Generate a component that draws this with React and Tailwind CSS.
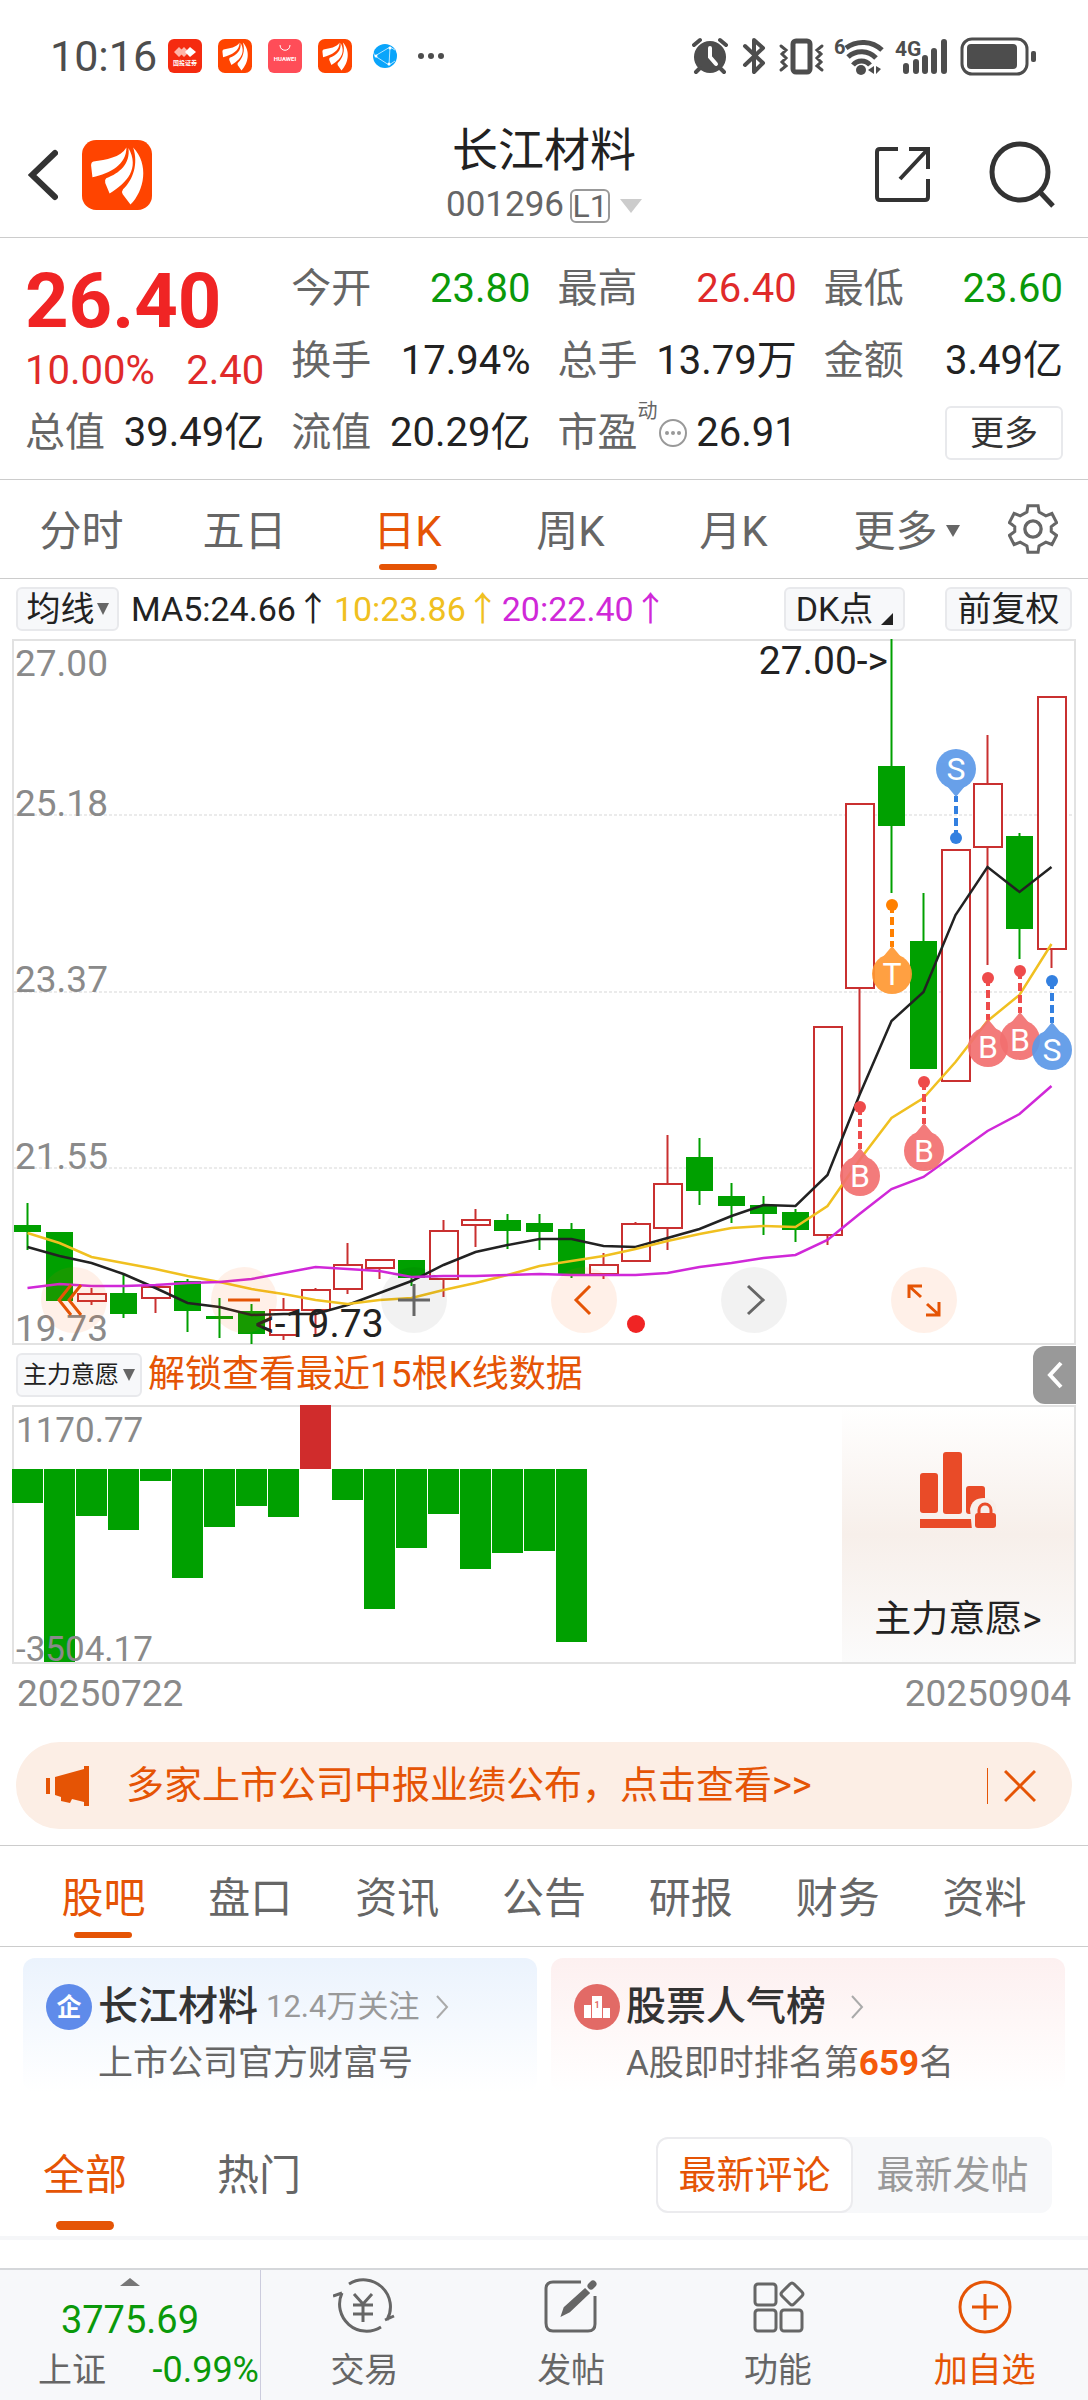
import { useState } from 'react';

// Daily candles: [high, bodyTop, bodyBottom, low, isUp]
const CANDLES = [
    [1203, 1225, 1232, 1250, 0],
    [1232, 1232, 1301, 1301, 0],
    [1288, 1294, 1301, 1305, 1],
    [1275, 1293, 1314, 1318, 0],
    [1287, 1287, 1298, 1313, 1],
    [1279, 1281, 1311, 1332, 0],
    [1298, 1316, 1319, 1338, 0],
    [1304, 1311, 1334, 1344, 0],
    [1298, 1310, 1335, 1340, 1],
    [1288, 1290, 1310, 1336, 1],
    [1243, 1265, 1289, 1294, 1],
    [1260, 1260, 1268, 1279, 1],
    [1260, 1260, 1278, 1286, 0],
    [1220, 1231, 1279, 1297, 1],
    [1209, 1220, 1225, 1247, 1],
    [1214, 1220, 1231, 1249, 0],
    [1214, 1223, 1232, 1250, 0],
    [1223, 1229, 1275, 1278, 0],
    [1253, 1265, 1274, 1279, 1],
    [1222, 1224, 1261, 1261, 1],
    [1135, 1184, 1228, 1250, 1],
    [1138, 1157, 1191, 1205, 0],
    [1183, 1196, 1206, 1223, 0],
    [1196, 1205, 1214, 1235, 0],
    [1209, 1212, 1230, 1242, 0],
    [1027, 1027, 1235, 1245, 1],
    [804, 804, 988, 1094, 1],
    [639, 766, 826, 893, 0],
    [893, 941, 1069, 1069, 0],
    [850, 850, 1081, 1081, 1],
    [735, 784, 847, 965, 1],
    [833, 836, 929, 959, 0],
    [697, 697, 949, 968, 1],
];

const MA5 = [1247, 1256, 1263, 1274, 1288, 1303, 1307, 1315, 1314, 1314, 1305, 1293, 1281, 1265, 1252, 1245, 1239, 1239, 1246, 1247, 1238, 1229, 1216, 1205, 1206, 1175, 1095, 1021, 992, 915, 867, 892, 867];
const MA10 = [1233, 1243, 1257, 1263, 1269, 1276, 1282, 1289, 1294, 1300, 1304, 1300, 1298, 1290, 1283, 1275, 1266, 1261, 1256, 1249, 1241, 1234, 1228, 1226, 1227, 1206, 1160, 1118, 1098, 1062, 1021, 995, 944];
const MA20 = [1288, 1284, 1286, 1286, 1285, 1283, 1282, 1279, 1273, 1267, 1269, 1271, 1277, 1276, 1276, 1275, 1274, 1275, 1275, 1275, 1273, 1267, 1263, 1258, 1255, 1240, 1214, 1189, 1177, 1154, 1131, 1114, 1086];

// Trade points: candle index, y of the dot, label, 1 = pin below / -1 = pin above
const MARKERS = [
    { i: 27, y: 905, label: 'T', dir: 1, dot: '#ff8000', pin: '#ff9933' },
    { i: 29, y: 838, label: 'S', dir: -1, dot: '#3380e0', pin: '#5c99e8' },
    { i: 30, y: 978, label: 'B', dir: 1, dot: '#ee4b4b', pin: '#f27070' },
    { i: 31, y: 971, label: 'B', dir: 1, dot: '#ee4b4b', pin: '#f27070' },
    { i: 32, y: 981, label: 'S', dir: 1, dot: '#3380e0', pin: '#5c99e8' },
    { i: 26, y: 1107, label: 'B', dir: 1, dot: '#ee4b4b', pin: '#f27070' },
    { i: 28, y: 1082, label: 'B', dir: 1, dot: '#ee4b4b', pin: '#f27070' },
];

// End of each bar, measured from the zero line at 64
const VOLUME = [98, 257, 111, 125, 76, 173, 122, 101, 112, 0, 95, 204, 143, 109, 164, 148, 146, 237];

const cx = (i) => 27.5 + i * 32;
const linePoints = (values) => values.map((y, i) => `${cx(i)},${y}`).join(' ');

const BrandLogo = ({ className }) => (
    <svg viewBox="0 0 208 208" className={className}>
        <rect width="208" height="208" rx="42" fill="#ff4400" />
        <g fill="#fff">
            <path d="M132 22C114 52 72 58 34 64Q27 66 27 76L31 111C86 98 132 72 132 22Z" />
            <path d="M138 24C144 72 112 98 72 114Q67 118 69 128L82 159C134 128 172 84 138 24Z" />
            <path d="M152 22C168 70 152 118 122 146Q117 152 121 161L144 192C186 150 200 72 152 22Z" />
        </g>
    </svg>
);

const StatusBar = () => (
    <div className="flex h-[112px] items-center justify-between pl-[50px] pr-[52px] text-[#4d4d4d]">
        <div className="flex items-center">
            <span className="w-[118px] text-[43px]">10:16</span>
            <div className="flex items-center gap-4">
                <svg viewBox="0 0 34 34" className="size-[34px]">
                    <rect width="34" height="34" rx="6" fill="#f52b10" />
                    <path d="M6 13l5-5 5 5-5 5zM11 13l5-5 5 5-5 5z" fill="#ffb5a8" />
                    <path d="M17 13l5-5 6 5-6 5z" fill="#fff" />
                    <text x="17" y="26" fontSize="6" fontWeight="700" textAnchor="middle" fill="#fff">国投证券</text>
                </svg>
                <BrandLogo className="size-[34px]" />
                <svg viewBox="0 0 34 34" className="size-[34px]">
                    <rect width="34" height="34" rx="6" fill="#ff4d58" />
                    <path d="M12 6c0 7 10 7 10 0" fill="none" stroke="#fff" />
                    <text x="17" y="22" fontSize="6" fontWeight="700" textAnchor="middle" fill="#fff">HUAWEI</text>
                </svg>
                <BrandLogo className="size-[34px]" />
                <svg viewBox="0 0 34 34" className="size-[34px]">
                    <circle cx="17" cy="17" r="12" fill="#0aa5fb" />
                    <path d="M7 17L22 8L21 26ZM7 17L5 13M22 8l5 3M21 26l6-4" fill="none" stroke="#fff" strokeWidth="0.7" />
                    <g fill="#fff">
                        <circle cx="8" cy="17" r="1.5" />
                        <circle cx="22" cy="9" r="1.5" />
                        <circle cx="21" cy="25" r="1.5" />
                    </g>
                </svg>
                <svg viewBox="0 0 26 6" className="h-[6px] w-[26px]" fill="currentColor">
                    <circle cx="3" cy="3" r="3" />
                    <circle cx="13" cy="3" r="3" />
                    <circle cx="23" cy="3" r="3" />
                </svg>
            </div>
        </div>

        {/* System icons */}
        <svg viewBox="0 0 344 40" className="h-10 w-[344px]" fill="currentColor">
            <circle cx="18" cy="21" r="16" />
            <path d="M18 12v9l6 7" fill="none" stroke="#fff" strokeWidth="4" strokeLinecap="round" />
            <path d="M2 9l6-5M34 9l-6-5M4 36l4-4M32 36l-4-4" fill="none" stroke="currentColor" strokeWidth="4" strokeLinecap="round" />
            <path d="M53 10l18 17-9 9V4l9 8-18 17" fill="none" stroke="currentColor" strokeWidth="4" strokeLinejoin="round" strokeLinecap="round" />
            <rect x="101" y="5" width="17" height="31" rx="3" fill="none" stroke="currentColor" strokeWidth="5" />
            <path d="M89 10l5 4-4 4 4 4-4 4 4 4-5 4M130 10l-5 4 4 4-4 4 4 4-4 4 5 4" fill="none" stroke="currentColor" strokeWidth="3" strokeLinecap="round" />
            <text x="142" y="18" fontSize="20" fontWeight="700">6</text>
            <g fill="none" stroke="currentColor" strokeWidth="5">
                <path d="M154 12a28 28 0 0 1 36 2" />
                <path d="M156 21a20 20 0 0 1 28 1" />
                <path d="M161 29a11 11 0 0 1 17 0" />
            </g>
            <circle cx="169" cy="34" r="5" />
            <path d="M182 30v8l-6-4zM184 30v8l5-5z" />
            <text x="203" y="20" fontSize="21" fontWeight="700">4G</text>
            <g stroke="currentColor" strokeWidth="6" strokeLinecap="round">
                <path d="M214 30v5M224 26v9M233 22v13M242 15v20M252 6v29" />
            </g>
            <rect x="270" y="3" width="65" height="35" rx="10" fill="none" stroke="currentColor" strokeWidth="3" />
            <rect x="275" y="8" width="50" height="25" rx="4" />
            <rect x="339" y="15" width="5" height="11" rx="2" />
        </svg>
    </div>
);

const Header = () => (
    <header className="flex h-[126px] items-center justify-between border-b border-[#ccc] px-7 text-[#333]">
        <div className="flex w-[200px] items-center gap-6">
            <button aria-label="返回">
                <svg viewBox="0 0 30 52" className="h-[52px] w-[30px]" fill="none" stroke="currentColor" strokeWidth="6" strokeLinecap="round">
                    <path d="M27 4L4 26l23 22" />
                </svg>
            </button>
            <BrandLogo className="size-[70px]" />
        </div>
        <div className="flex flex-col items-center pt-1.5">
            <h1 className="text-[46px] leading-[56px] text-[#222]">长江材料</h1>
            <div className="flex h-[56px] items-center text-[35px] text-[#666]">
                <span>001296</span>
                <span className="ml-1.5 flex h-[34px] w-10 items-center justify-center rounded-md border-2 border-[#999] text-[32px]">L1</span>
                <svg viewBox="0 0 22 14" className="ml-2.5 h-3.5 w-[22px]">
                    <path d="M0 0h22L11 14z" fill="#ccc" />
                </svg>
            </div>
        </div>
        <div className="flex w-[200px] items-center justify-end gap-14 pr-1">
            <button aria-label="分享">
                <svg viewBox="0 0 58 58" className="size-[58px]" fill="none" stroke="currentColor" strokeWidth="4">
                    <path d="M24 3H6Q3 3 3 6V51Q3 54 6 54H51Q54 54 54 51V33" />
                    <path d="M35 3h19v20M54 3L26 33" />
                </svg>
            </button>
            <button aria-label="搜索">
                <svg viewBox="0 0 68 68" className="size-[68px]" fill="none" stroke="currentColor" strokeWidth="5">
                    <circle cx="32" cy="31" r="28" />
                    <path d="M51 50l14 15" />
                </svg>
            </button>
        </div>
    </header>
);

const Stat = ({ label, value, tone = 'text-[#222]' }) => (
    <div className="flex items-center justify-between">
        <dt className="text-[#666]">{label}</dt>
        <dd className={tone}>{value}</dd>
    </div>
);

const Quote = () => (
    <dl className="grid auto-rows-[72px] grid-cols-4 gap-x-[27px] border-b border-[#ccc] px-[25px] pb-[10px] pt-[15px] text-[40px] leading-[72px]">
        <div className="row-span-2 pt-1 text-[#e02a2a]">
            <dd className="text-[76px] font-bold leading-[88px] text-[#f02424]">26.40</dd>
            <dd className="flex justify-between leading-[52px]">
                <span>10.00%</span>
                <span>2.40</span>
            </dd>
        </div>
        <Stat label="今开" value="23.80" tone="text-[#0a990a]" />
        <Stat label="最高" value="26.40" tone="text-[#e02a2a]" />
        <Stat label="最低" value="23.60" tone="text-[#0a990a]" />
        <Stat label="换手" value="17.94%" />
        <Stat label="总手" value="13.79万" />
        <Stat label="金额" value="3.49亿" />
        <Stat label="总值" value="39.49亿" />
        <Stat label="流值" value="20.29亿" />
        <div className="flex items-center justify-between">
            <dt className="flex items-center text-[#666]">
                市盈
                <sup className="top-0 self-start text-[20px] leading-[28px]">动</sup>
                <svg viewBox="0 0 30 30" className="size-[30px]" fill="#999">
                    <circle cx="15" cy="15" r="13" fill="none" stroke="#999" strokeWidth="2" />
                    <circle cx="9" cy="15" r="2" />
                    <circle cx="15" cy="15" r="2" />
                    <circle cx="21" cy="15" r="2" />
                </svg>
            </dt>
            <dd className="text-[#222]">26.91</dd>
        </div>
        <div className="flex items-center justify-end">
            <button className="h-[54px] w-[118px] rounded-md border-2 border-[#e8e9ec] text-[34px] leading-none text-[#333]">更多</button>
        </div>
    </dl>
);

const PERIODS = ['分时', '五日', '日K', '周K', '月K'];

const PeriodTabs = () => {
    const [active, setActive] = useState('日K');

    return (
        <nav className="flex h-[99px] border-b border-[#ccc] text-[42px] text-[#666]">
            {PERIODS.map((p) => (
                <button
                    key={p}
                    onClick={() => setActive(p)}
                    className={`relative flex flex-1 items-center justify-center pt-1 ${active === p ? 'text-[#e55405]' : ''}`}
                >
                    {p}
                    {active === p && <span className="absolute bottom-2 h-1.5 w-[58px] rounded-full bg-[#e55405]" />}
                </button>
            ))}
            <button className="flex flex-1 items-center justify-center gap-2 pt-1">
                <span className="pl-5">更多</span>
                <svg viewBox="0 0 14 12" className="h-3 w-3.5" fill="currentColor">
                    <path d="M0 0h14L7 12z" />
                </svg>
            </button>
            <button aria-label="设置" className="flex w-[110px] items-center justify-center">
                <svg viewBox="0 0 148 148" className="size-[50px]" fill="none" stroke="currentColor" strokeWidth="9">
                    <path d="M59 5H89L92 24L112 35L130 28L144 55L128 67V81L144 93L130 120L112 113L92 124L89 143H59L56 124L36 113L18 120L4 93L20 81V67L4 55L18 28L36 35L56 24Z" />
                    <circle cx="74" cy="74" r="24" strokeWidth="10" />
                </svg>
            </button>
        </nav>
    );
};

const Caret = ({ className }) => (
    <svg viewBox="0 0 12 12" className={className} fill="#666">
        <path d="M0 0h12L6 12z" />
    </svg>
);

const AverageRow = () => (
    <div className="flex h-[60px] items-center justify-between px-4 text-[34px] text-[#222]">
        <div className="flex items-center">
            <button className="flex h-11 w-[103px] items-center justify-center gap-0.5 rounded-md border-2 border-[#e8e9ec] bg-[#f7f8fa] leading-none">
                均线
                <Caret className="size-3" />
            </button>
            <span className="ml-3">MA5:24.66↑</span>
            <span className="ml-1 text-[#f0c020]">10:23.86↑</span>
            <span className="ml-0.5 text-[#d028d8]">20:22.40↑</span>
        </div>
        <div className="flex gap-10">
            <button className="flex h-11 w-[121px] items-center justify-center gap-2 rounded-md border-2 border-[#e8e9ec] bg-[#f7f8fa] leading-none">
                DK点
                <svg viewBox="0 0 12 12" className="mt-5 size-3">
                    <path d="M12 0v12H0z" fill="#222" />
                </svg>
            </button>
            <button className="h-11 w-[127px] rounded-md border-2 border-[#e8e9ec] bg-[#f7f8fa] leading-none">前复权</button>
        </div>
    </div>
);

const Marker = ({ i, y, label, dir, dot, pin }) => {
    const x = cx(i) + 0.5;
    const center = y + 69 * dir;
    return (
        <g>
            <circle cx={x} cy={y} r="6" fill={dot} />
            <path d={`M${x} ${y}V${y + 42 * dir}`} stroke={dot} strokeWidth="4" strokeDasharray="8 4" />
            <g fill={pin} opacity="0.92">
                <circle cx={x} cy={center} r="20" />
                <path d={`M${x - 9} ${center - 17 * dir}L${x} ${center - 28 * dir}L${x + 9} ${center - 17 * dir}Z`} />
            </g>
            <text x={x} y={center + 11} fontSize="32" textAnchor="middle" fill="#fff">{label}</text>
        </g>
    );
};

const TOOLS = [
    { name: '最早', warm: true, d: 'M30 18L18 33l12 15M40 18L28 33l12 15' },
    { name: '缩小', warm: true, d: 'M17 33h32' },
    { name: '放大', warm: false, d: 'M17 33h32M33 17v32' },
    { name: '左移', warm: true, d: 'M39 19L25 33l14 14' },
    { name: '右移', warm: false, d: 'M27 19l15 14-15 14' },
    { name: '全屏', warm: true, d: 'M18 31V19h13M19 20l11 10M48 35v13H35M47 47L36 37' },
];

const KLineChart = () => (
    <div className="relative px-3">
        <svg viewBox="12 639 1064 706" className="block w-full">
            <rect x="13" y="640" width="1062" height="704" fill="none" stroke="#e2e2e2" strokeWidth="2" />
            <g stroke="#ebebeb" strokeWidth="2" strokeDasharray="3 2">
                <path d="M14 815H1074M14 992H1074M14 1168H1074" />
            </g>

            {CANDLES.map(([high, top, bottom, low, up], i) => (
                <g key={i} stroke={up ? '#c93030' : '#00a000'} strokeWidth="2">
                    <path d={`M${cx(i)} ${high}V${top}M${cx(i)} ${bottom}V${low}`} />
                    {up ? (
                        <rect x={cx(i) - 13.5} y={top} width="28" height={bottom - top} fill="#fff" />
                    ) : (
                        <rect x={cx(i) - 13.5} y={top} width="27" height={bottom - top} fill="#00a000" stroke="none" />
                    )}
                </g>
            ))}

            <g fill="none" strokeWidth="2.5">
                <polyline points={linePoints(MA5)} stroke="#222" />
                <polyline points={linePoints(MA10)} stroke="#f0c020" />
                <polyline points={linePoints(MA20)} stroke="#d028d8" />
            </g>

            <g fontSize="37" fill="#8a8a8a">
                <text x="15" y="676">27.00</text>
                <text x="15" y="816">25.18</text>
                <text x="15" y="992">23.37</text>
                <text x="15" y="1169">21.55</text>
                <text x="15" y="1341">19.73</text>
            </g>
            <g fontSize="39" fill="#222">
                <text x="888" y="674" textAnchor="end">27.00-&gt;</text>
                <text x="255" y="1337">&lt;-19.73</text>
            </g>

            {MARKERS.map((m) => (
                <Marker key={m.i} {...m} />
            ))}
            <circle cx="636" cy="1324" r="9" fill="#f02424" />
        </svg>

        {/* Chart controls */}
        <div className="absolute bottom-3 left-[41px] flex gap-[104px]">
            {TOOLS.map((t) => (
                <button
                    key={t.name}
                    aria-label={t.name}
                    className={`size-[66px] rounded-full ${t.warm ? 'bg-[#ff5a00]/9 text-[#e55405]' : 'bg-black/5 text-[#666]'}`}
                >
                    <svg viewBox="0 0 66 66" className="size-full" fill="none" stroke="currentColor" strokeWidth="3">
                        <path d={t.d} />
                    </svg>
                </button>
            ))}
        </div>
    </div>
);

const IntentPanel = () => (
    <section>
        <div className="flex h-[60px] items-center justify-between pl-4 pr-3">
            <div className="flex items-center gap-1.5">
                <button className="flex h-11 w-[126px] items-center justify-center gap-1 rounded-md border-2 border-[#e8e9ec] bg-[#f7f8fa] text-[24px] leading-none text-[#222]">
                    主力意愿
                    <Caret className="size-3" />
                </button>
                <a href="#unlock" className="text-[37px] leading-[56px] text-[#e55405]">解锁查看最近15根K线数据</a>
            </div>
            <button aria-label="展开" className="flex h-[58px] w-[43px] items-center justify-center rounded-l-xl bg-[#999]">
                <svg viewBox="0 0 16 28" className="h-7 w-4" fill="none" stroke="#fff" strokeWidth="4">
                    <path d="M14 2L3 14l11 12" />
                </svg>
            </button>
        </div>

        <div className="relative px-3">
            <svg viewBox="0 0 1064 259" className="block w-full">
                <rect x="1" y="1" width="1062" height="257" fill="none" stroke="#e2e2e2" strokeWidth="2" />
                {VOLUME.map((end, i) => (
                    <rect
                        key={i}
                        x={i * 32}
                        y={Math.min(end, 64)}
                        width="31"
                        height={Math.abs(end - 64)}
                        fill={end < 64 ? '#d02c2c' : '#00a000'}
                    />
                ))}
                <g fontSize="35" fill="#8a8a8a">
                    <text x="4" y="37">1170.77</text>
                    <text x="4" y="256">-3504.17</text>
                </g>
            </svg>
            <a
                href="#intent"
                className="absolute bottom-0.5 right-3.5 top-0.5 flex w-[232px] flex-col items-center justify-end bg-linear-to-b from-white via-[#f7efea] to-[#fbfbfb] pb-3.5 text-[37px] leading-[56px] text-[#222]"
            >
                <svg viewBox="0 0 76 76" className="mb-16 size-[76px]" fill="#e94b28">
                    <rect x="0" y="21" width="18" height="40" rx="3" />
                    <rect x="23" y="0" width="19" height="62" rx="3" />
                    <rect x="46" y="34" width="19" height="28" rx="3" />
                    <rect x="0" y="67" width="54" height="9" />
                    <path d="M50 57Q52 46 64 46Q76 46 78 60V78H52Z" fill="#f7efea" />
                    <rect x="55" y="61" width="21" height="15" rx="3" />
                    <path d="M59 62v-4a6 6 0 0 1 12 0v4" fill="none" stroke="#e94b28" strokeWidth="3" />
                </svg>
                主力意愿&gt;
            </a>
        </div>

        <div className="flex h-[60px] items-center justify-between px-[17px] text-[37px] text-[#8a8a8a]">
            <span>20250722</span>
            <span>20250904</span>
        </div>
    </section>
);

const Notice = () => (
    <div className="mx-4 mb-4 mt-[18px] flex h-[87px] items-center rounded-full bg-[#fceee5] pl-[30px] pr-9 text-[#e55405]">
        <svg viewBox="0 0 44 40" className="h-10 w-11" fill="currentColor">
            <path d="M0 12h4v16H0zM9 11L38 3V0h5v40h-5v-4l-12-3-2 4-9-2v-4l-6-2z" />
        </svg>
        <a href="#report" className="ml-9 flex-1 text-[38px]">多家上市公司中报业绩公布，点击查看&gt;&gt;</a>
        <button aria-label="关闭" className="border-l border-current pl-4">
            <svg viewBox="0 0 32 36" className="h-9 w-8" fill="none" stroke="currentColor" strokeWidth="3">
                <path d="M1 3l30 30M31 3L1 33" />
            </svg>
        </button>
    </div>
);

const SECTIONS = ['股吧', '盘口', '资讯', '公告', '研报', '财务', '资料'];

const SectionTabs = () => {
    const [active, setActive] = useState('股吧');

    return (
        <nav className="flex h-[102px] border-y border-[#ccc] px-[30px] text-[42px] text-[#666]">
            {SECTIONS.map((s) => (
                <button
                    key={s}
                    onClick={() => setActive(s)}
                    className={`relative flex flex-1 items-center justify-center pt-1 ${active === s ? 'text-[#e55405]' : ''}`}
                >
                    {s}
                    {active === s && <span className="absolute bottom-2 h-1.5 w-[58px] rounded-full bg-[#e55405]" />}
                </button>
            ))}
        </nav>
    );
};

const Chevron = ({ className }) => (
    <svg viewBox="0 0 14 24" className={className} fill="none" stroke="#aaa" strokeWidth="2">
        <path d="M2 1l10 11L2 23" />
    </svg>
);

const Cards = () => (
    <div className="grid grid-cols-2 gap-3.5 px-[23px] pt-[11px]">
        <a href="#official" className="flex gap-1.5 rounded-xl bg-linear-to-b from-[#ebf3fd] to-white pb-1 pl-[23px] pt-[26px]">
            <svg viewBox="0 0 46 46" className="size-[46px]">
                <circle cx="23" cy="23" r="23" fill="#5f8bea" />
                <text x="23" y="32" fontSize="25" fontWeight="700" textAnchor="middle" fill="#fff">企</text>
            </svg>
            <div>
                <div className="flex items-center text-[40px] leading-[46px] text-[#333]">
                    <strong className="font-medium">长江材料</strong>
                    <span className="ml-2 text-[31px] text-[#999]">12.4万关注</span>
                    <Chevron className="ml-4 h-6 w-3.5" />
                </div>
                <div className="mt-2.5 text-[35px] leading-[48px] text-[#666]">上市公司官方财富号</div>
            </div>
        </a>
        <a href="#rank" className="flex gap-1.5 rounded-xl bg-linear-to-b from-[#fdf0f0] to-white pb-1 pl-[23px] pt-[26px]">
            <svg viewBox="0 0 46 46" className="size-[46px]">
                <circle cx="23" cy="23" r="23" fill="#e26a66" />
                <path d="M10 21h7v13h-7zM18 12h10v22H18zM29 24h7v10h-7z" fill="#fff" />
                <text x="23" y="24" fontSize="9" fontWeight="700" textAnchor="middle" fill="#e26a66">1</text>
            </svg>
            <div>
                <div className="flex items-center text-[40px] leading-[46px] text-[#333]">
                    <strong className="font-medium">股票人气榜</strong>
                    <Chevron className="ml-6 h-6 w-3.5" />
                </div>
                <div className="mt-2.5 text-[35px] leading-[48px] text-[#666]">
                    A股即时排名第<b className="text-[#f5590a]">659</b>名
                </div>
            </div>
        </a>
    </div>
);

const PostFilter = () => (
    <div className="mt-[22px] flex h-[126px] items-center justify-between border-b-4 border-[#f5f6f8] pl-[43px] pr-9 text-[42px]">
        <div className="flex gap-[90px] self-stretch">
            <button className="relative flex items-center justify-center text-[#e55405]">
                全部
                <span className="absolute bottom-1.5 h-[9px] w-[58px] rounded-full bg-[#e55405]" />
            </button>
            <button className="text-[#666]">热门</button>
        </div>
        <div className="flex h-[76px] rounded-xl bg-[#f7f8fa] text-[38px]">
            <button className="w-[197px] rounded-xl border-2 border-[#ebebee] bg-white text-[#e55405]">最新评论</button>
            <button className="w-[199px] text-[#999]">最新发帖</button>
        </div>
    </div>
);

const NavItem = ({ label, tone = 'text-[#666]', children }) => (
    <button className={`flex flex-1 flex-col items-center pt-2 ${tone}`}>
        <svg viewBox="0 0 62 60" className="h-[60px] w-[62px]" fill="none" stroke="currentColor" strokeWidth="3">
            {children}
        </svg>
        <span className="mt-2 leading-[48px]">{label}</span>
    </button>
);

const BottomBar = () => (
    <footer className="mt-auto flex h-[132px] border-t-2 border-[#d5d7da] bg-[#f7f8fa] text-[34px]">
        <a href="#index" className="flex w-[261px] flex-col items-center border-r border-[#ccd] pt-2 text-[#0a990a]">
            <svg viewBox="0 0 20 8" className="h-2 w-5" fill="#777">
                <path d="M10 0l10 8H0z" />
            </svg>
            <span className="mt-2.5 text-[38px] leading-[48px]">3775.69</span>
            <div className="flex w-full justify-between pl-[38px] pr-px leading-[52px]">
                <span className="text-[#666]">上证</span>
                <span className="text-[36px]">-0.99%</span>
            </div>
        </a>
        <NavItem label="交易">
            <path d="M16 6A27 27 0 0 1 54 42M0 18L9 15M9 15A27 27 0 0 0 48 49M52 42l9-4" />
            <path d="M21 16l9 10 9-10M20 27h20M20 36h20M30 26v18" />
        </NavItem>
        <NavItem label="发帖">
            <path d="M41 4H13Q6 4 6 11V45Q6 53 13 53H48Q55 53 55 46V18" />
            <path d="M23 36l2-6L45 12l3 3-19 18z" fill="currentColor" />
            <path d="M51 8l2-2" strokeWidth="7" strokeLinecap="round" />
        </NavItem>
        <NavItem label="功能">
            <rect x="8" y="6" width="21" height="21" rx="3" />
            <rect x="8" y="32" width="21" height="21" rx="3" />
            <rect x="34" y="32" width="21" height="21" rx="3" />
            <path d="M43 6q2-2 4 0l8 8q2 2 0 4l-8 8q-2 2-4 0l-8-8q-2-2 0-4z" />
        </NavItem>
        <NavItem label="加自选" tone="text-[#e55405]">
            <circle cx="31" cy="29" r="25" />
            <path d="M18 29h26M31 16v26" />
        </NavItem>
    </footer>
);

const App = () => (
    <div className="flex min-h-screen flex-col bg-white font-['Roboto','Noto_Sans_CJK_SC',sans-serif]">
        <StatusBar />
        <Header />
        <Quote />
        <PeriodTabs />
        <AverageRow />
        <KLineChart />
        <IntentPanel />
        <Notice />
        <SectionTabs />
        <Cards />
        <PostFilter />
        <BottomBar />
    </div>
);

export default App;
